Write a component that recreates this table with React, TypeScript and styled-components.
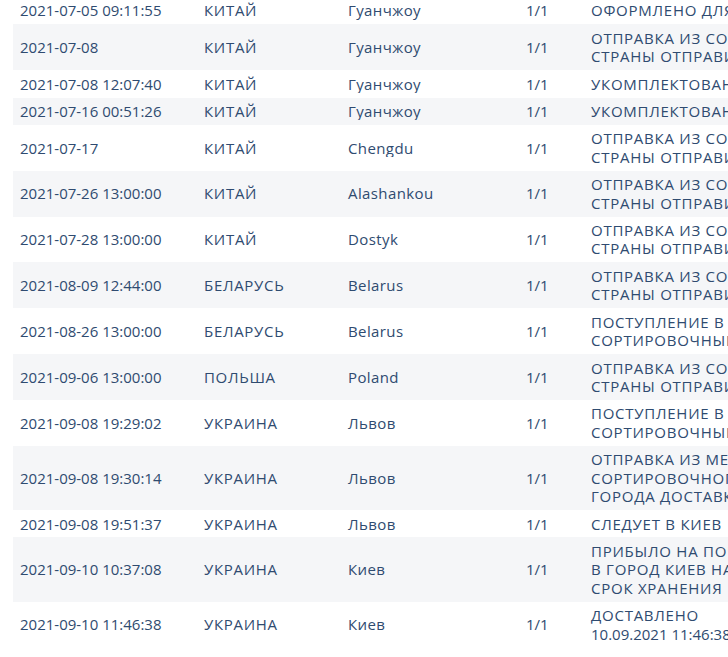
import React from "react";
import styled, { createGlobalStyle } from "styled-components";

const Global = createGlobalStyle`
  html, body {
    margin: 0;
    padding: 0;
    background: #ffffff;
    overflow: hidden;
  }
  body {
    font-family: "Open Sans", "Liberation Sans", sans-serif;
  }
`;

const Table = styled.div`
  margin: -3px 0 0 13px;
  width: 900px;
  color: #2f4b70;
  font-size: 15px;
  line-height: 18.5px;
`;

const Row = styled.div`
  display: grid;
  grid-template-columns: 184px 144px 178px 65px 329px;
  align-items: center;
  padding: 4.43px 0;
  &:nth-child(even) {
    background: #f5f6f8;
  }
`;

const Cell = styled.div<{ $spacing?: number }>`
  padding-left: 7px;
  white-space: pre;
  overflow: hidden;
  letter-spacing: ${(p) => p.$spacing ?? 0}px;
`;

const Line = styled.div<{ $numeric?: boolean }>`
  letter-spacing: ${(p) => (p.$numeric ? 0 : 0.75)}px;
`;

type Ev = { date: string; country: string; city: string; qty: string; status: string[] };

const SORT = ["ОТПРАВКА ИЗ СОРТИРОВОЧНОГО ЦЕНТРА", "СТРАНЫ ОТПРАВИТЕЛЯ"];
const POST = ["ПОСТУПЛЕНИЕ В МЕЖДУНАРОДНЫЙ", "СОРТИРОВОЧНЫЙ ЦЕНТР"];
const PACK = ["УКОМПЛЕКТОВАНО В ГРУЗОВОЕ МЕСТО"];

const events: Ev[] = [
  { date: "2021-07-05 09:11:55", country: "КИТАЙ", city: "Гуанчжоу", qty: "1/1", status: ["ОФОРМЛЕНО ДЛЯ ОТПРАВКИ"] },
  { date: "2021-07-08", country: "КИТАЙ", city: "Гуанчжоу", qty: "1/1", status: SORT },
  { date: "2021-07-08 12:07:40", country: "КИТАЙ", city: "Гуанчжоу", qty: "1/1", status: PACK },
  { date: "2021-07-16 00:51:26", country: "КИТАЙ", city: "Гуанчжоу", qty: "1/1", status: PACK },
  { date: "2021-07-17", country: "КИТАЙ", city: "Chengdu", qty: "1/1", status: SORT },
  { date: "2021-07-26 13:00:00", country: "КИТАЙ", city: "Alashankou", qty: "1/1", status: SORT },
  { date: "2021-07-28 13:00:00", country: "КИТАЙ", city: "Dostyk", qty: "1/1", status: SORT },
  { date: "2021-08-09 12:44:00", country: "БЕЛАРУСЬ", city: "Belarus", qty: "1/1", status: SORT },
  { date: "2021-08-26 13:00:00", country: "БЕЛАРУСЬ", city: "Belarus", qty: "1/1", status: POST },
  { date: "2021-09-06 13:00:00", country: "ПОЛЬША", city: "Poland", qty: "1/1", status: SORT },
  { date: "2021-09-08 19:29:02", country: "УКРАИНА", city: "Львов", qty: "1/1", status: POST },
  { date: "2021-09-08 19:30:14", country: "УКРАИНА", city: "Львов", qty: "1/1", status: ["ОТПРАВКА ИЗ МЕЖДУНАРОДНОГО", "СОРТИРОВОЧНОГО ЦЕНТРА В СТОРОНУ", "ГОРОДА ДОСТАВКИ"] },
  { date: "2021-09-08 19:51:37", country: "УКРАИНА", city: "Львов", qty: "1/1", status: ["СЛЕДУЕТ В КИЕВ"] },
  { date: "2021-09-10 10:37:08", country: "УКРАИНА", city: "Киев", qty: "1/1", status: ["ПРИБЫЛО НА ПОЧТОВОЕ ОТДЕЛЕНИЕ", "В ГОРОД КИЕВ НА ОТДЕЛЕНИЕ", "СРОК ХРАНЕНИЯ"] },
  { date: "2021-09-10 11:46:38", country: "УКРАИНА", city: "Киев", qty: "1/1", status: ["ДОСТАВЛЕНО", "10.09.2021 11:46:38"] },
];

export default function App() {
  return (
    <>
      <Global />
      <Table>
        {events.map((e, i) => (
          <Row key={i}>
            <Cell>{e.date}</Cell>
            <Cell $spacing={0.7}>{e.country}</Cell>
            <Cell $spacing={0.4}>{e.city}</Cell>
            <Cell>{e.qty}</Cell>
            <Cell>
              {e.status.map((l, j) => (
                <Line key={j} $numeric={/^[\d.: ]+$/.test(l)}>
                  {l}
                </Line>
              ))}
            </Cell>
          </Row>
        ))}
      </Table>
    </>
  );
}
